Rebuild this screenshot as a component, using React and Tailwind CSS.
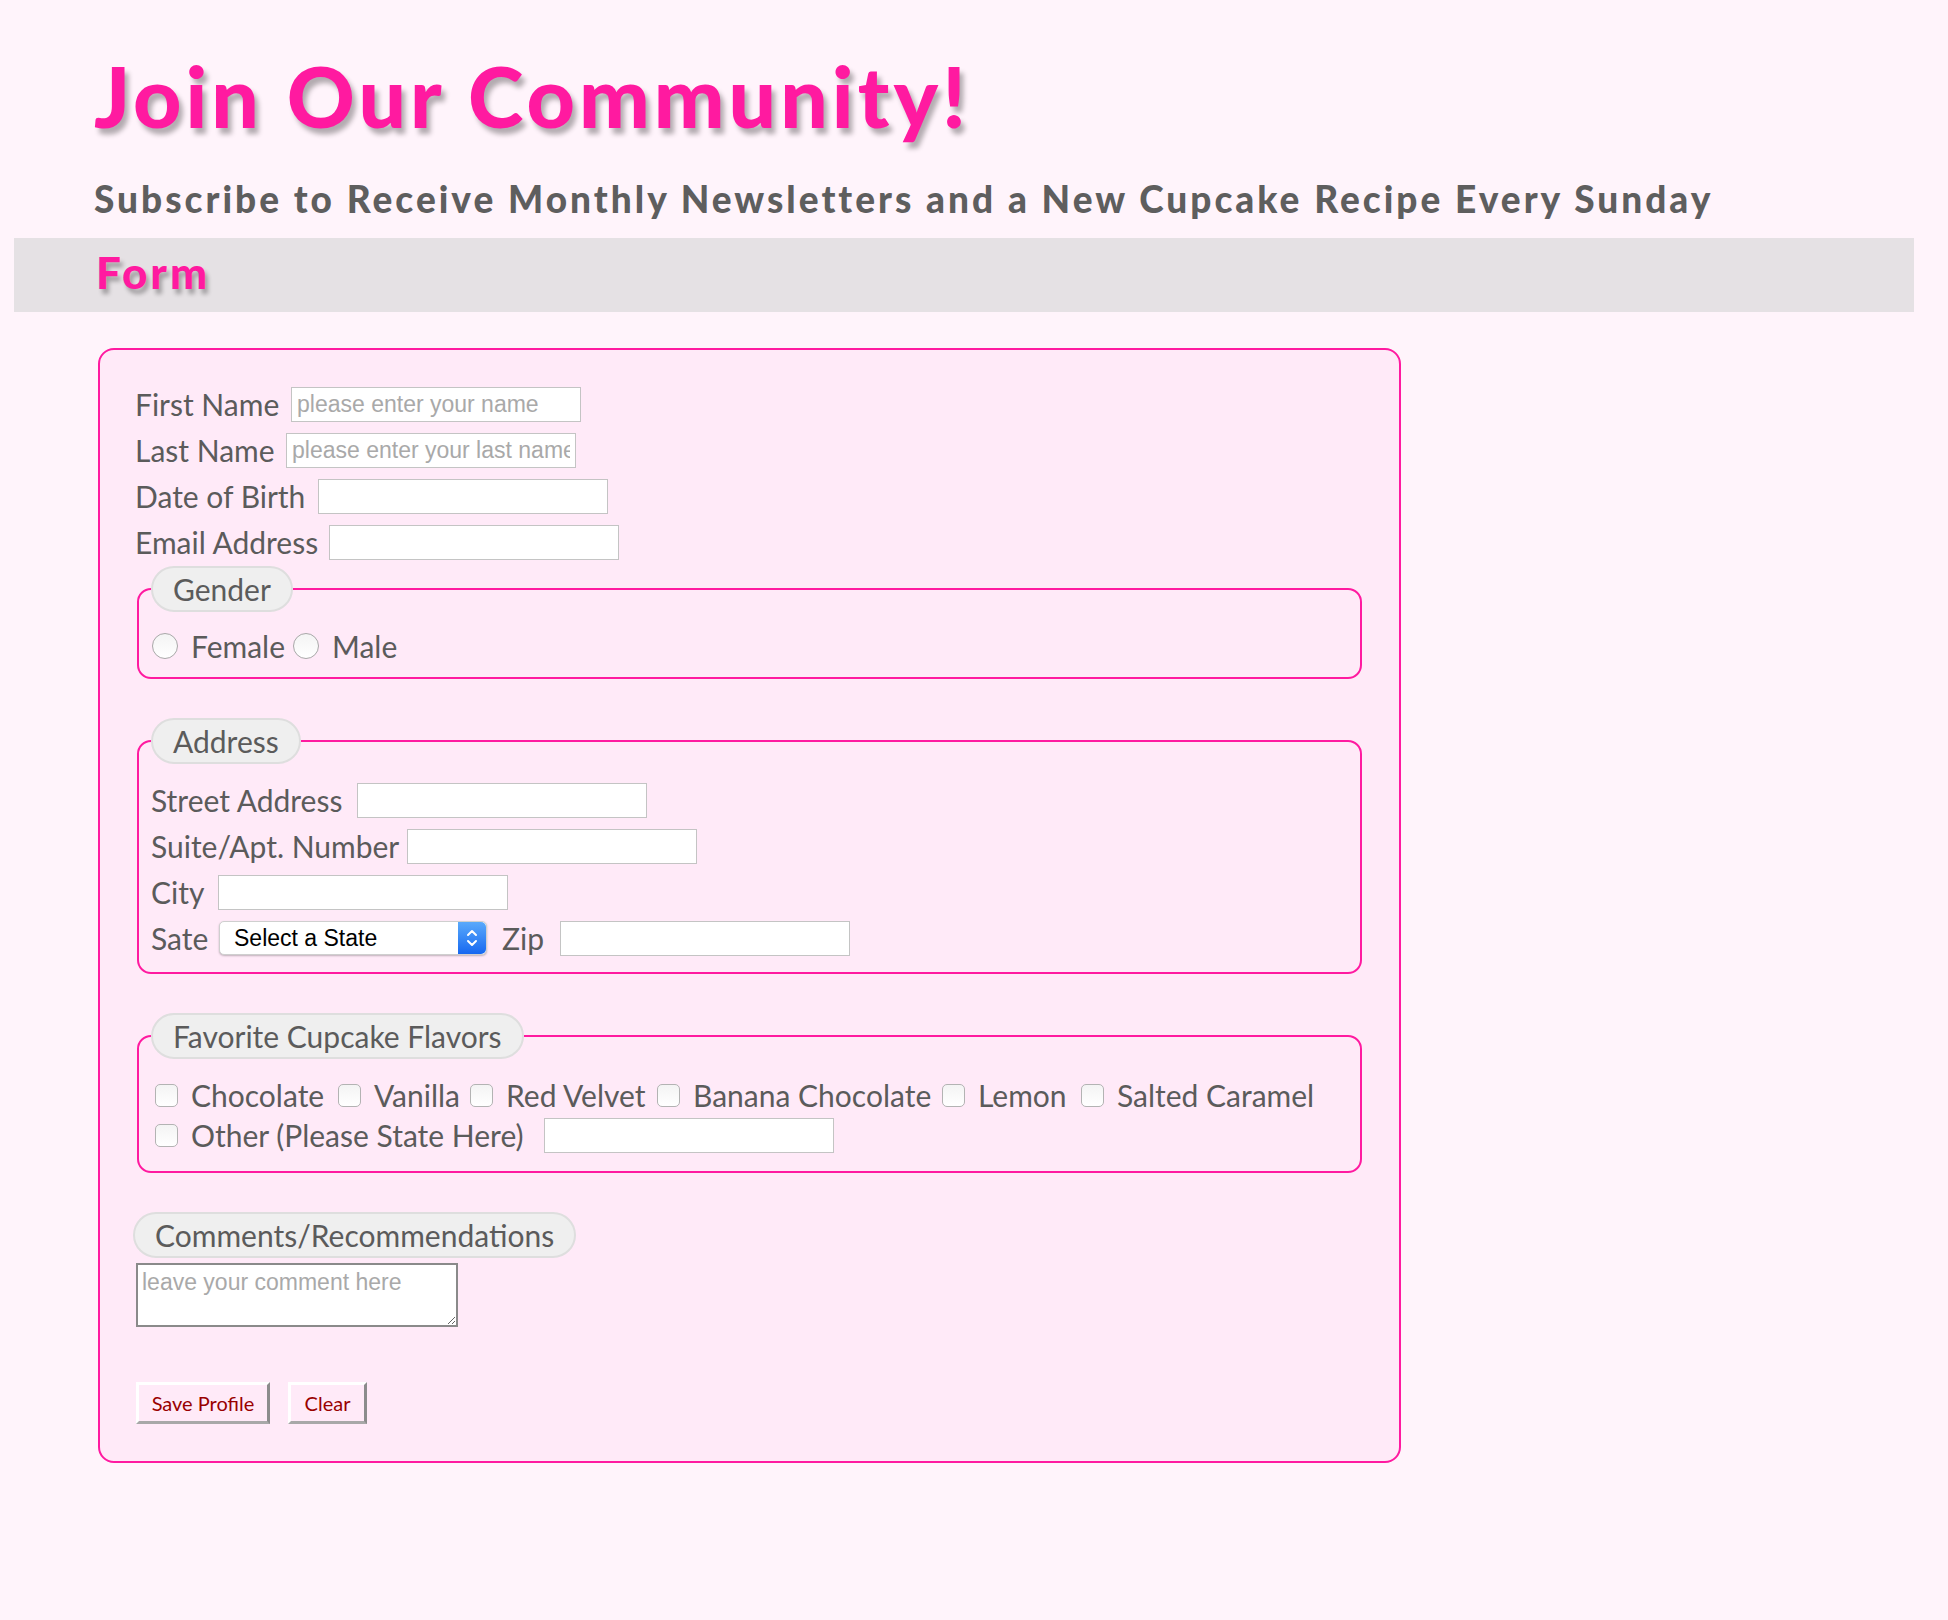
const inputCls =
  "w-[290px] h-[35px] shrink-0 bg-white border border-[#c4c4c4] px-[5px] text-[23px] font-['Liberation_Sans',sans-serif] text-[#333] placeholder:text-[#a9a9a9] outline-none";

const legendCls =
  "h-[46px] px-[20px] bg-[#efefef] border-2 border-[#dedede] rounded-full text-[30px] leading-[42px] text-[#5b5b5b]";

const fieldsetCls = "mx-[2px] border-2 border-[#ff1aa0] rounded-[14px] px-[12px]";

function Row({ label, width, placeholder }) {
  return (
    <div className="flex items-center h-[46px]">
      <label className="shrink-0 whitespace-nowrap text-[30px]" style={{ width }}>
        {label}
      </label>
      <input type="text" placeholder={placeholder} className={inputCls} />
    </div>
  );
}

function Radio({ label, width }) {
  return (
    <label className="flex items-center shrink-0" style={{ width }}>
      <input
        type="radio"
        name="gender"
        className="appearance-none w-[26px] h-[26px] rounded-full border border-[#a8a8a8] bg-linear-to-b from-[#f4f4f4] to-white"
      />
      <span className="ml-[13px] text-[30px] whitespace-nowrap">{label}</span>
    </label>
  );
}

function Check({ label, width }) {
  return (
    <label className="flex items-center shrink-0" style={{ width }}>
      <input
        type="checkbox"
        className="appearance-none w-[23px] h-[23px] rounded-[5px] border border-[#b3b3b3] bg-linear-to-b from-[#f4f4f4] to-white"
      />
      <span className="ml-[13px] text-[30px] whitespace-nowrap">{label}</span>
    </label>
  );
}

function StateSelect() {
  return (
    <div className="flex w-[268px] h-[34px] shrink-0 bg-white rounded-[5px] border border-[#cfcfcf] shadow-[0_1px_2px_rgba(0,0,0,0.25)]">
      <span className="flex-1 flex items-center pl-[14px] text-[23px] text-black font-['Liberation_Sans',sans-serif]">
        Select a State
      </span>
      <span className="w-[28px] flex items-center justify-center rounded-r-[5px] bg-linear-to-b from-[#5aa9fb] to-[#1667f0]">
        <svg width="14" height="24" viewBox="0 0 14 24" fill="none" stroke="white" strokeWidth="2" strokeLinecap="round" strokeLinejoin="round">
          <path d="M3 9l4-4 4 4" />
          <path d="M3 15l4 4 4-4" />
        </svg>
      </span>
    </div>
  );
}

export default function App() {
  return (
    <div className="min-h-screen bg-[#fff4fb] font-['Lato',sans-serif] text-[#5b5b5b] pb-[150px]">
      {/* Header */}
      <header className="pl-[94px] pt-[56px]">
        <h1 className="text-[84px] leading-[80px] font-black tracking-[4px] text-[#ff1aa0] whitespace-nowrap [text-shadow:4px_6px_5px_rgba(0,0,0,0.3)]">
          Join Our Community!
        </h1>
        <h2 className="mt-[43px] mb-[19px] text-[37px] leading-[40px] font-black tracking-[3px] text-[#5e5e5e] whitespace-nowrap">
          Subscribe to Receive Monthly Newsletters and a New Cupcake Recipe Every Sunday
        </h2>
      </header>

      <div className="ml-[14px] w-[1900px] h-[74px] bg-[#e5e1e4] pl-[82px] pt-[14px]">
        <h3 className="text-[44px] leading-[40px] font-black tracking-[3px] text-[#ff1aa0] [text-shadow:3px_5px_4px_rgba(0,0,0,0.3)]">
          Form
        </h3>
      </div>

      {/* Form */}
      <form className="ml-[98px] mt-[36px] w-[1303px] border-2 border-[#ff1aa0] rounded-[16px] bg-[#ffeaf8] px-[35px] pt-[31px] pb-[37px]">
        <Row label="First Name" width={156} placeholder="please enter your name" />
        <Row label="Last Name" width={151} placeholder="please enter your last name" />
        <Row label="Date of Birth" width={183} />
        <Row label="Email Address" width={194} />

        <fieldset className={`${fieldsetCls} mt-[1px] pt-[11px] pb-[8px]`}>
          <legend className={legendCls}>Gender</legend>
          <div className="flex items-center h-[46px] pl-[1px]">
            <Radio label="Female" width={141} />
            <Radio label="Male" />
          </div>
        </fieldset>

        <fieldset className={`${fieldsetCls} mt-[39px] pt-[13px] pb-[11px]`}>
          <legend className={legendCls}>Address</legend>
          <Row label="Street Address" width={206} />
          <Row label="Suite/Apt. Number" width={256} />
          <Row label="City" width={67} />
          <div className="flex items-center h-[46px]">
            <label className="w-[68px] shrink-0 text-[30px]">Sate</label>
            <StateSelect />
            <label className="ml-[15px] w-[58px] shrink-0 text-[30px]">Zip</label>
            <input type="text" className={inputCls} />
          </div>
        </fieldset>

        <fieldset className={`${fieldsetCls} mt-[39px] pt-[16px] pb-[16px]`}>
          <legend className={legendCls}>Favorite Cupcake Flavors</legend>
          <div className="flex items-center h-[40px] pl-[4px]">
            <Check label="Chocolate" width={183} />
            <Check label="Vanilla" width={132} />
            <Check label="Red Velvet" width={187} />
            <Check label="Banana Chocolate" width={285} />
            <Check label="Lemon" width={139} />
            <Check label="Salted Caramel" />
          </div>
          <div className="flex items-center h-[40px] pl-[4px]">
            <Check label="Other (Please State Here)" width={389} />
            <input type="text" className={inputCls} />
          </div>
        </fieldset>

        <div className="mt-[39px] -ml-[2px] inline-flex items-center h-[46px] px-[20px] bg-[#efefef] border-2 border-[#dedede] rounded-full text-[30px]">
          Comments/Recommendations
        </div>
        <div className="ml-[1px] mt-[5px]">
          <textarea
            placeholder="leave your comment here"
            className="block w-[322px] h-[64px] bg-white border-2 border-[#8a8a8a] px-[4px] pt-[4px] text-[23px] leading-[26px] font-['Liberation_Sans',sans-serif] placeholder:text-[#a9a9a9] outline-none"
          />
        </div>

        <div className="ml-[1px] mt-[55px] flex gap-[18px]">
          <button
            type="button"
            className="w-[134px] h-[42px] bg-[#ffeaf8] border-[3px] border-t-white border-l-white border-r-[#8c8c8c] border-b-[#a8a8a8] text-[20px] text-[#990000]"
          >
            Save Profile
          </button>
          <button
            type="reset"
            className="w-[79px] h-[42px] bg-[#ffeaf8] border-[3px] border-t-white border-l-white border-r-[#8c8c8c] border-b-[#a8a8a8] text-[20px] text-[#990000]"
          >
            Clear
          </button>
        </div>
      </form>
    </div>
  );
}
